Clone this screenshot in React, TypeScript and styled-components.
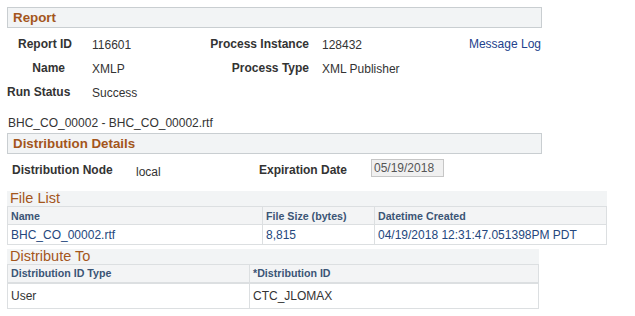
import React from "react";
import styled, { createGlobalStyle } from "styled-components";

const GlobalStyle = createGlobalStyle`
  body {
    margin: 0;
    background: #ffffff;
    font-family: "Liberation Sans", Arial, sans-serif;
    font-size: 12px;
    color: #333333;
  }
`;

const Page = styled.div`
  padding: 7px 0 0 7px;
`;

const SectionBar = styled.div`
  box-sizing: border-box;
  width: 535px;
  height: 21px;
  border: 1px solid #c9ced1;
  background: #f2f4f5;
  padding-left: 5px;
  font-size: 13.33px;
  font-weight: 700;
  line-height: 19px;
  color: #a4561c;
`;

const FieldGrid = styled.div`
  display: grid;
  grid-template-columns: 65px 123px 114px 140px 1fr;
  grid-auto-rows: 24px;
  align-items: center;
  width: 535px;
  margin-top: 4px;
`;

const Label = styled.div<{ $pr?: number; $pt?: number }>`
  font-weight: 700;
  text-align: right;
  white-space: nowrap;
  line-height: 14px;
  padding-right: ${({ $pr }) => $pr ?? 0}px;
  padding-top: ${({ $pt }) => $pt ?? 0}px;
`;

const Value = styled.div<{ $indent?: number; $pt?: number }>`
  white-space: nowrap;
  line-height: 14px;
  padding-left: ${({ $indent }) => $indent ?? 0}px;
  padding-top: ${({ $pt }) => $pt ?? 1}px;
`;

const LinkText = styled.a`
  text-align: right;
  padding-right: 1px;
  color: #22428c;
  text-decoration: none;
  white-space: nowrap;
`;

const FileName = styled.div`
  margin-top: 12px;
  margin-left: 1px;
  line-height: 14px;
  margin-bottom: 3px;
`;

const DetailRow = styled.div`
  display: grid;
  grid-template-columns: 124px 100px 111px auto;
  align-items: start;
  height: 18px;
  margin-top: 5px;
  padding-left: 5px;
`;

const LeftLabel = styled(Label)`
  text-align: left;
`;

const DateBox = styled.div`
  box-sizing: border-box;
  width: 73px;
  height: 18px;
  margin-left: 24px;
  padding-left: 2px;
  border: 1px solid #c6c6c6;
  background: #f0f0f0;
  color: #555555;
  line-height: 16px;
`;

const GridBlock = styled.div<{ $width: number; $mt: number }>`
  width: ${({ $width }) => $width}px;
  margin-top: ${({ $mt }) => $mt}px;
`;

const GridTitle = styled.div`
  height: 15px;
  line-height: 15px;
  padding-left: 3px;
  background: #f2f4f5;
  font-size: 14.5px;
  color: #a4561c;
`;

const Table = styled.table`
  width: 100%;
  border-collapse: collapse;
  table-layout: fixed;
`;

const Th = styled.th<{ $heavy?: boolean }>`
  box-sizing: border-box;
  height: 18px;
  padding: 0 3px;
  border: 1px solid #dcdfe1;
  border-bottom-width: ${({ $heavy }) => ($heavy ? 2 : 1)}px;
  background: #f3f4f5;
  text-align: left;
  font-size: 10.67px;
  font-weight: 700;
  color: #3b5575;
  white-space: nowrap;
`;

const Td = styled.td<{ $tall?: boolean; $link?: boolean }>`
  box-sizing: border-box;
  height: ${({ $tall }) => ($tall ? 26 : 20)}px;
  padding: 0 3px;
  border: 1px solid #dcdfe1;
  font-size: 12px;
  color: ${({ $link }) => ($link ? "#25477d" : "#333333")};
  white-space: nowrap;
`;

const App: React.FC = () => {
  return (
    <Page>
      <GlobalStyle />
      <SectionBar>Report</SectionBar>
      <FieldGrid>
        <Label>Report ID</Label>
        <Value $indent={20}>116601</Value>
        <Label>Process Instance</Label>
        <Value $indent={13}>128432</Value>
        <LinkText href="#">Message Log</LinkText>

        <Label $pr={7}>Name</Label>
        <Value $indent={20}>XMLP</Value>
        <Label>Process Type</Label>
        <Value $indent={13}>XML Publisher</Value>
        <div />

        <Label $pr={2}>Run Status</Label>
        <Value $indent={20}>Success</Value>
      </FieldGrid>

      <FileName>BHC_CO_00002 - BHC_CO_00002.rtf</FileName>
      <SectionBar>Distribution Details</SectionBar>
      <DetailRow>
        <LeftLabel $pt={4}>Distribution Node</LeftLabel>
        <Value $pt={6}>local</Value>
        <Label $pt={4}>Expiration Date</Label>
        <DateBox>05/19/2018</DateBox>
      </DetailRow>

      <GridBlock $width={600} $mt={14}>
        <GridTitle>File List</GridTitle>
        <Table>
          <colgroup>
            <col style={{ width: 255 }} />
            <col style={{ width: 112 }} />
            <col />
          </colgroup>
          <thead>
            <tr>
              <Th>Name</Th>
              <Th>File Size (bytes)</Th>
              <Th>Datetime Created</Th>
            </tr>
          </thead>
          <tbody>
            <tr>
              <Td $link>BHC_CO_00002.rtf</Td>
              <Td $link>8,815</Td>
              <Td $link>04/19/2018 12:31:47.051398PM PDT</Td>
            </tr>
          </tbody>
        </Table>
      </GridBlock>

      <GridBlock $width={532} $mt={4}>
        <GridTitle>Distribute To</GridTitle>
        <Table>
          <colgroup>
            <col style={{ width: 242 }} />
            <col />
          </colgroup>
          <thead>
            <tr>
              <Th $heavy>Distribution ID Type</Th>
              <Th $heavy>*Distribution ID</Th>
            </tr>
          </thead>
          <tbody>
            <tr>
              <Td $tall>User</Td>
              <Td $tall>CTC_JLOMAX</Td>
            </tr>
          </tbody>
        </Table>
      </GridBlock>
    </Page>
  );
};

export default App;
